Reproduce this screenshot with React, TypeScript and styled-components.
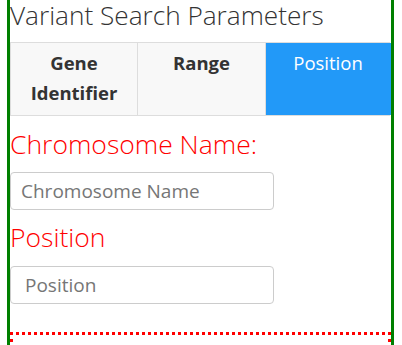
import React from "react";
import styled, { createGlobalStyle } from "styled-components";

const GlobalStyle = createGlobalStyle`
  html, body {
    margin: 0;
    padding: 0;
    background: #ffffff;
    overflow: hidden;
  }
  body {
    font-family: "Open Sans", "Noto Sans", sans-serif;
    color: #333333;
  }
  * { box-sizing: border-box; }
`;

const Frame = styled.div`
  margin-left: 7px;
  width: 387px;
  height: 345px;
  overflow: hidden;
  border-left: 3px solid #008000;
  border-right: 3px solid #008000;
  display: flex;
  flex-direction: column;
`;

const Title = styled.h2`
  margin: 0 0 12px 0;
  font-size: 26.2px;
  font-weight: 300;
  line-height: 30px;
  color: #333333;
  white-space: nowrap;
`;

const Tabs = styled.div`
  display: grid;
  grid-template-columns: 127px 128px 125px;
  width: 380px;
  border-top: 1px solid #dddddd;
  border-bottom: 1px solid #dddddd;
  border-left: 1px solid #dddddd;
`;

const Tab = styled.div<{ $active?: boolean }>`
  padding: 5px 6px 7px;
  text-align: center;
  font-size: 18.5px;
  line-height: 30px;
  font-weight: ${(p) => (p.$active ? 400 : 700)};
  color: ${(p) => (p.$active ? "#ffffff" : "#333333")};
  background: ${(p) => (p.$active ? "#2299f8" : "#f8f8f8")};
  border-right: 1px solid ${(p) => (p.$active ? "#2299f8" : "#dddddd")};
`;

const Form = styled.div`
  padding-top: 13px;
  display: flex;
  flex-direction: column;
`;

const Label = styled.label<{ $first?: boolean }>`
  display: block;
  margin: ${(p) => (p.$first ? "0" : "12px")} 0 ${(p) => (p.$first ? "12px" : "13px")};
  font-size: 26.5px;
  font-weight: 300;
  line-height: 31px;
  color: #ff0000;
  white-space: nowrap;
`;

const Input = styled.input<{ $indent: number }>`
  display: block;
  width: 264px;
  height: 38px;
  margin: 0;
  padding: 0 8px 0 ${(p) => p.$indent}px;
  border: 1px solid #cccccc;
  border-radius: 4px;
  font-family: "Open Sans", "Noto Sans", sans-serif;
  font-size: 19px;
  color: #555555;
  background: #ffffff;
  outline: none;
  &::placeholder {
    color: #767676;
    opacity: 1;
  }
`;

const Results = styled.div`
  margin-top: 28px;
  width: 381px;
  min-height: 40px;
  flex-shrink: 0;
  border: 3px dotted #ff0000;
`;

export default function App() {
  return (
    <>
      <GlobalStyle />
      <Frame>
        <Title>Variant Search Parameters</Title>
        <Tabs>
          <Tab>Gene<br />Identifier</Tab>
          <Tab>Range</Tab>
          <Tab $active>Position</Tab>
        </Tabs>
        <Form>
          <Label $first>Chromosome Name:</Label>
          <Input $indent={10} placeholder="Chromosome Name" />
          <Label>Position</Label>
          <Input $indent={14} placeholder="Position" />
        </Form>
        <Results />
      </Frame>
    </>
  );
}
